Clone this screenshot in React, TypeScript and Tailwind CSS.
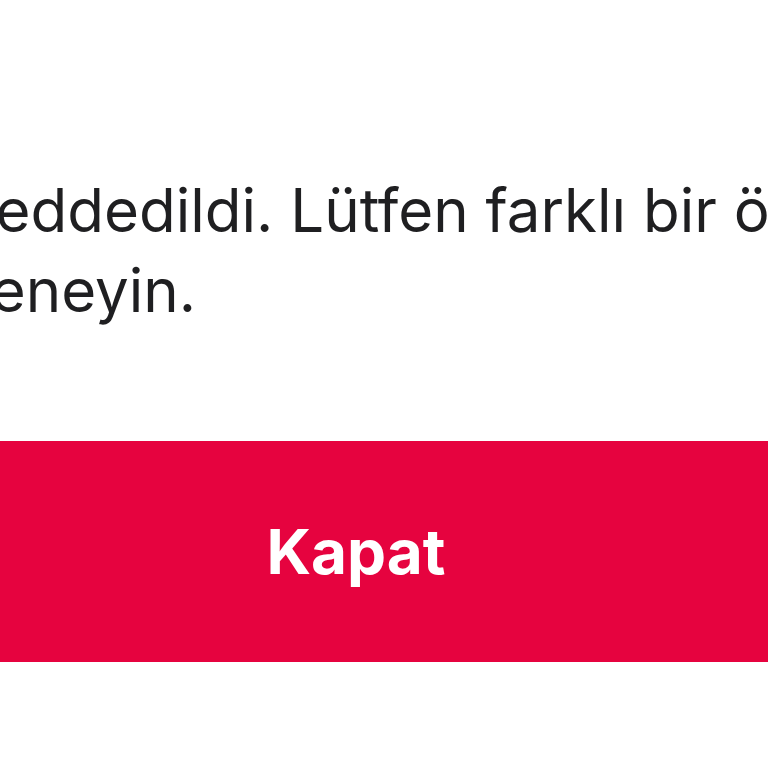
export default function App() {
  return (
    <div className="h-[768px] w-[768px] overflow-hidden bg-white font-['Inter','Liberation_Sans',Arial,sans-serif]">
      <div className="-ml-[56px] w-[824px] pt-[170px]">
        {/* Message */}
        <div className="text-[60px] leading-[80px] text-[#1f1f21] whitespace-nowrap">
          <div className="pl-[30px]">reddedildi. Lütfen farklı bir ödeme yöntemi</div>
          <div className="pl-[10px]">deneyin.</div>
        </div>

        {/* Close button */}
        <button className="mt-[111px] flex h-[221px] w-full items-center justify-center bg-[#e6033f] text-[62px] font-bold text-white">
          Kapat
        </button>
      </div>
    </div>
  )
}
